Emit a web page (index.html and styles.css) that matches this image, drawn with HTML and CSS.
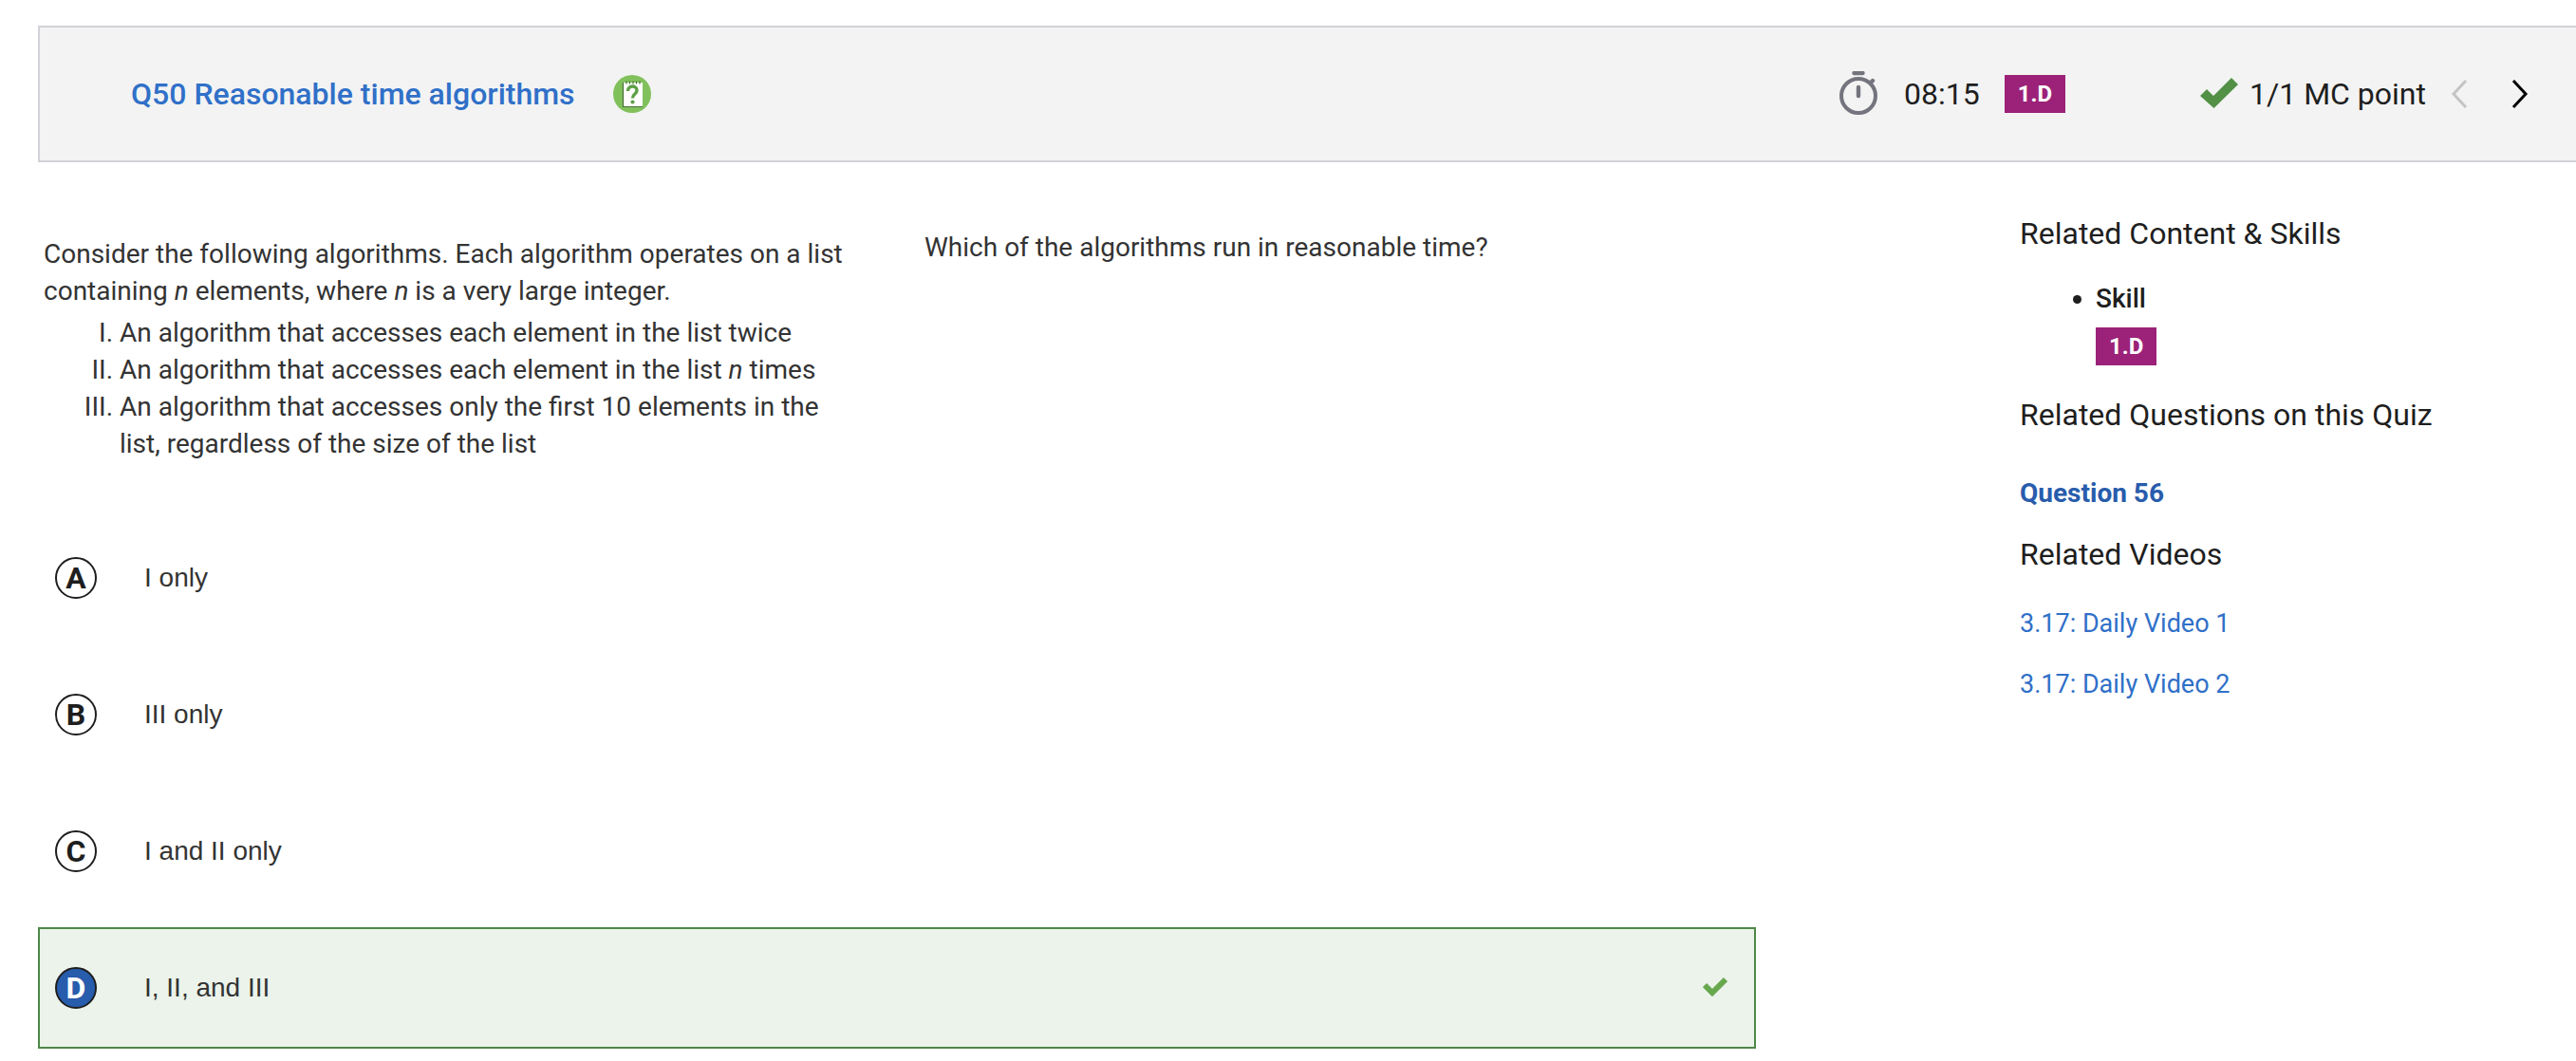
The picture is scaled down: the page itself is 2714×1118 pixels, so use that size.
FILE: index.html
```html
<!DOCTYPE html>
<html lang="en">
<head>
<meta charset="utf-8">
<title>Q50 Reasonable time algorithms</title>
<link rel="stylesheet" href="styles.css">
</head>
<body>
<header class="bar">
  <h1 class="title"><a href="#">Q50 Reasonable time algorithms</a></h1>
  <svg class="type-icon" viewBox="0 0 40 40" role="img" aria-label="Multiple choice question">
    <circle cx="20" cy="20" r="20" fill="#81c15c"/>
    <path d="M10.500 8H31v25H10.500z" fill="#fff"/>
    <path d="M10.500 8v25.500H31" fill="none" stroke="#467038" stroke-width="1.200"/>
    <path d="M14 6.500v3M17.500 6.500v3M21 6.500v3M24.500 6.500v3M28 6.500v3" stroke="#467038" stroke-width="1.200"/>
    <path d="M15.500 17c0-6.500 9.500-6.500 9.500-.8 0 4-4.500 3.800-4.500 8.300" fill="none" stroke="#5da045" stroke-width="3.400"/>
    <circle cx="20.500" cy="28.500" r="2.100" fill="#5da045"/>
  </svg>
  <div class="status">
    <svg class="timer" viewBox="0 0 40 48" aria-hidden="true">
      <circle cx="20" cy="26" r="18" fill="none" stroke="#73747d" stroke-width="4"/>
      <path d="M15.500 2h9M20 17v9M33 12l2-2" fill="none" stroke="#73747d" stroke-width="4.400" stroke-linecap="round"/>
    </svg>
    <span class="time">08:15</span>
    <span class="tag">1.D</span>
  </div>
  <svg class="score-check" viewBox="0 0 40 34" aria-hidden="true"><path d="M0 19l7-7 7 7L33 0l7 7-25.500 25z" fill="#529046"/></svg>
  <span class="score">1/1 MC point</span>
  <button class="nav" type="button" aria-label="Previous question" disabled><svg viewBox="0 0 18 30"><path d="M16 1L3 15l13 14"/></svg></button>
  <button class="nav next" type="button" aria-label="Next question"><svg viewBox="0 0 18 30"><path d="M2 1l13 14L2 29"/></svg></button>
</header>
<div class="page">
  <main class="question">
    <div class="prompt">
      <section class="stimulus">
        <p>Consider the following algorithms. Each algorithm operates on a list containing <em>n</em> elements, where <em>n</em> is a very large integer.</p>
        <ol>
          <li>An algorithm that accesses each element in the list twice</li>
          <li>An algorithm that accesses each element in the list <em>n</em> times</li>
          <li>An algorithm that accesses only the first 10 elements in the list, regardless of the size of the list</li>
        </ol>
      </section>
      <p class="stem">Which of the algorithms run in reasonable time?</p>
    </div>
    <ul class="choices">
      <li class="choice"><span class="letter">A</span><span class="answer">I only</span></li>
      <li class="choice"><span class="letter">B</span><span class="answer">III only</span></li>
      <li class="choice"><span class="letter">C</span><span class="answer">I and II only</span></li>
      <li class="choice correct"><span class="letter">D</span><span class="answer">I, II, and III</span>
        <svg class="mark" viewBox="0 0 26 24" role="img" aria-label="Correct"><path d="M2 9l8 8L24 3" fill="none" stroke="#67a84d" stroke-width="6"/></svg></li>
    </ul>
  </main>
  <aside class="related">
    <h2>Related Content &amp; Skills</h2>
    <ul class="skills"><li>Skill<br><span class="tag">1.D</span></li></ul>
    <h2>Related Questions on this Quiz</h2>
    <a class="quiz-link" href="#">Question 56</a>
    <h2>Related Videos</h2>
    <nav class="videos" aria-label="Related videos">
      <a href="#">3.17: Daily Video 1</a>
      <a href="#">3.17: Daily Video 2</a>
    </nav>
  </aside>
</div>
</body>
</html>
```
FILE: styles.css
```css
* { box-sizing: border-box; }
body {
  margin: 0;
  padding: 27px 0 0 40px;
  background: #fff;
  color: #1e1e1e;
  font: 28px/38px Roboto, sans-serif;
}
h1, h2, p, ul, ol { margin: 0; padding: 0; font-weight: 400; }
a { color: #3070c8; text-decoration: none; }
svg { display: block; flex: none; }

.bar {
  display: flex;
  align-items: center;
  height: 144px;
  padding: 0 50px 0 96px;
  border: 2px solid #d2d2d8;
  border-right: 0;
  background: #f3f3f3;
  font-size: 32px;
}
.title { font-size: 32px; font-weight: 500; }
.type-icon { width: 40px; height: 40px; margin-left: 40px; }
.status { display: flex; align-items: center; margin-left: auto; }
.timer { width: 40px; height: 48px; margin-right: 28px; }
.time { margin-right: 26px; }
.tag {
  display: inline-block;
  padding: 0 14px;
  background: #9b2278;
  color: #fff;
  font-size: 24px;
  font-weight: 700;
  line-height: 40px;
}
.score-check { width: 40px; height: 34px; margin: 0 12px 0 142px; }
.nav {
  margin-left: 26px;
  padding: 0;
  border: 0;
  background: none;
}
.nav svg { width: 18px; height: 30px; fill: none; stroke: #c4c4c4; stroke-width: 3px; }
.next { margin-left: 46px; }
.next svg { stroke: #000; }

.page { display: flex; }
.question { flex: 1; color: #333; }
.prompt { display: grid; grid-template-columns: 51% 1fr; padding: 71px 0 58px 6px; }
.stimulus { padding: 6px 60px 0 0; line-height: 39px; }
.stimulus ol { padding: 5px 0 0 80px; list-style: upper-roman; }
.stem { padding-left: 8px; }
.choices { list-style: none; }
.choice {
  display: flex;
  align-items: center;
  height: 128px;
  margin-bottom: 16px;
  padding: 0 28px 0 16px;
  border: 2px solid transparent;
  font-family: "Liberation Sans", Arial, sans-serif;
}
.letter {
  width: 44px;
  height: 44px;
  margin-right: 50px;
  border: 2px solid #1e1e1e;
  border-radius: 50%;
  color: #1e1e1e;
  font: 700 32px/40px Roboto, sans-serif;
  text-align: center;
}
.correct { border-color: #4c8846; background: #ebf3eb; }
.correct .letter { background: #285cac; color: #fff; }
.mark { width: 26px; height: 24px; margin-left: auto; }

.related {
  display: flex;
  flex-direction: column;
  align-items: flex-start;
  width: 586px;
  margin-left: 278px;
  padding-top: 56px;
}
.related h2 { font-size: 32px; line-height: 38px; }
.skills { padding: 31px 0 33px 80px; font-weight: 500; }
.skills .tag { margin-top: 11px; }
.quiz-link { margin: 45px 0 26px; color: #285cac; font-weight: 700; }
.videos {
  display: flex;
  flex-direction: column;
  gap: 26px;
  padding-top: 35px;
  font-size: 27px;
}
```
